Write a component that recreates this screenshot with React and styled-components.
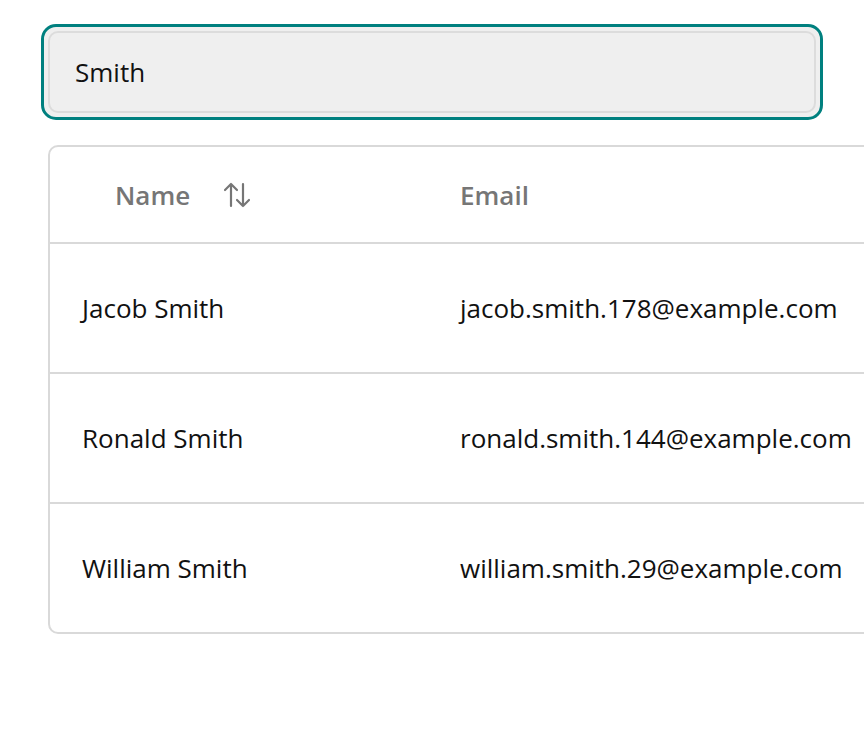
import React from 'react';
import styled, { createGlobalStyle } from 'styled-components';

const GlobalStyle = createGlobalStyle`
  html, body {
    margin: 0;
    padding: 0;
    background: #fff;
    overflow: hidden;
  }
  body {
    font-family: "Open Sans", "Noto Sans", sans-serif;
    color: #111;
  }
`;

const Page = styled.div`
  padding: 24px 0 0 41px;
  width: 1100px;
`;

const SearchFrame = styled.div`
  width: 782px;
  box-sizing: border-box;
  border: 3px solid #00807f;
  border-radius: 15px;
  background: #efefef;
  padding: 4px;
`;

const SearchInput = styled.input`
  display: block;
  width: 100%;
  height: 82px;
  box-sizing: border-box;
  border: 2px solid #dcdcdc;
  border-radius: 10px;
  background: #efefef;
  padding: 0 25px;
  font-family: inherit;
  font-size: 26px;
  color: #111;
  outline: none;
`;

const Table = styled.div`
  margin: 25px 0 0 7px;
  width: 1000px;
  border: 2px solid #d9d9d9;
  border-radius: 10px;
  overflow: hidden;
`;

const Row = styled.div`
  display: grid;
  grid-template-columns: 378px 1fr;
  align-items: center;
  height: ${({ $header }) => ($header ? '95px' : '128px')};
  border-top: ${({ $first }) => ($first ? 'none' : '2px solid #d9d9d9')};
`;

const Cell = styled.div`
  padding-left: 32px;
  font-size: 26px;
  white-space: nowrap;
`;

const HeadCell = styled.div`
  padding-left: ${({ $indent }) => ($indent ? '65px' : '32px')};
  font-size: 26px;
  font-weight: 600;
  color: #767676;
  display: flex;
  align-items: center;
  gap: 32px;
`;

const SortIcon = () => (
  <svg width="30" height="26" viewBox="0 0 30 26" fill="none" stroke="#767676" strokeWidth="2.2" strokeLinecap="round" strokeLinejoin="round">
    <path d="M9 24V2M3 8l6-6 6 6" />
    <path d="M21 2v22M15 18l6 6 6-6" />
  </svg>
);

const people = [
  { name: 'Jacob Smith', email: 'jacob.smith.178@example.com' },
  { name: 'Ronald Smith', email: 'ronald.smith.144@example.com' },
  { name: 'William Smith', email: 'william.smith.29@example.com' },
];

export default function App() {
  return (
    <Page>
      <GlobalStyle />
      <SearchFrame>
        <SearchInput defaultValue="Smith" />
      </SearchFrame>
      <Table>
        <Row $header $first>
          <HeadCell $indent>
            Name
            <SortIcon />
          </HeadCell>
          <HeadCell>Email</HeadCell>
        </Row>
        {people.map((p) => (
          <Row key={p.email}>
            <Cell>{p.name}</Cell>
            <Cell>{p.email}</Cell>
          </Row>
        ))}
      </Table>
    </Page>
  );
}
